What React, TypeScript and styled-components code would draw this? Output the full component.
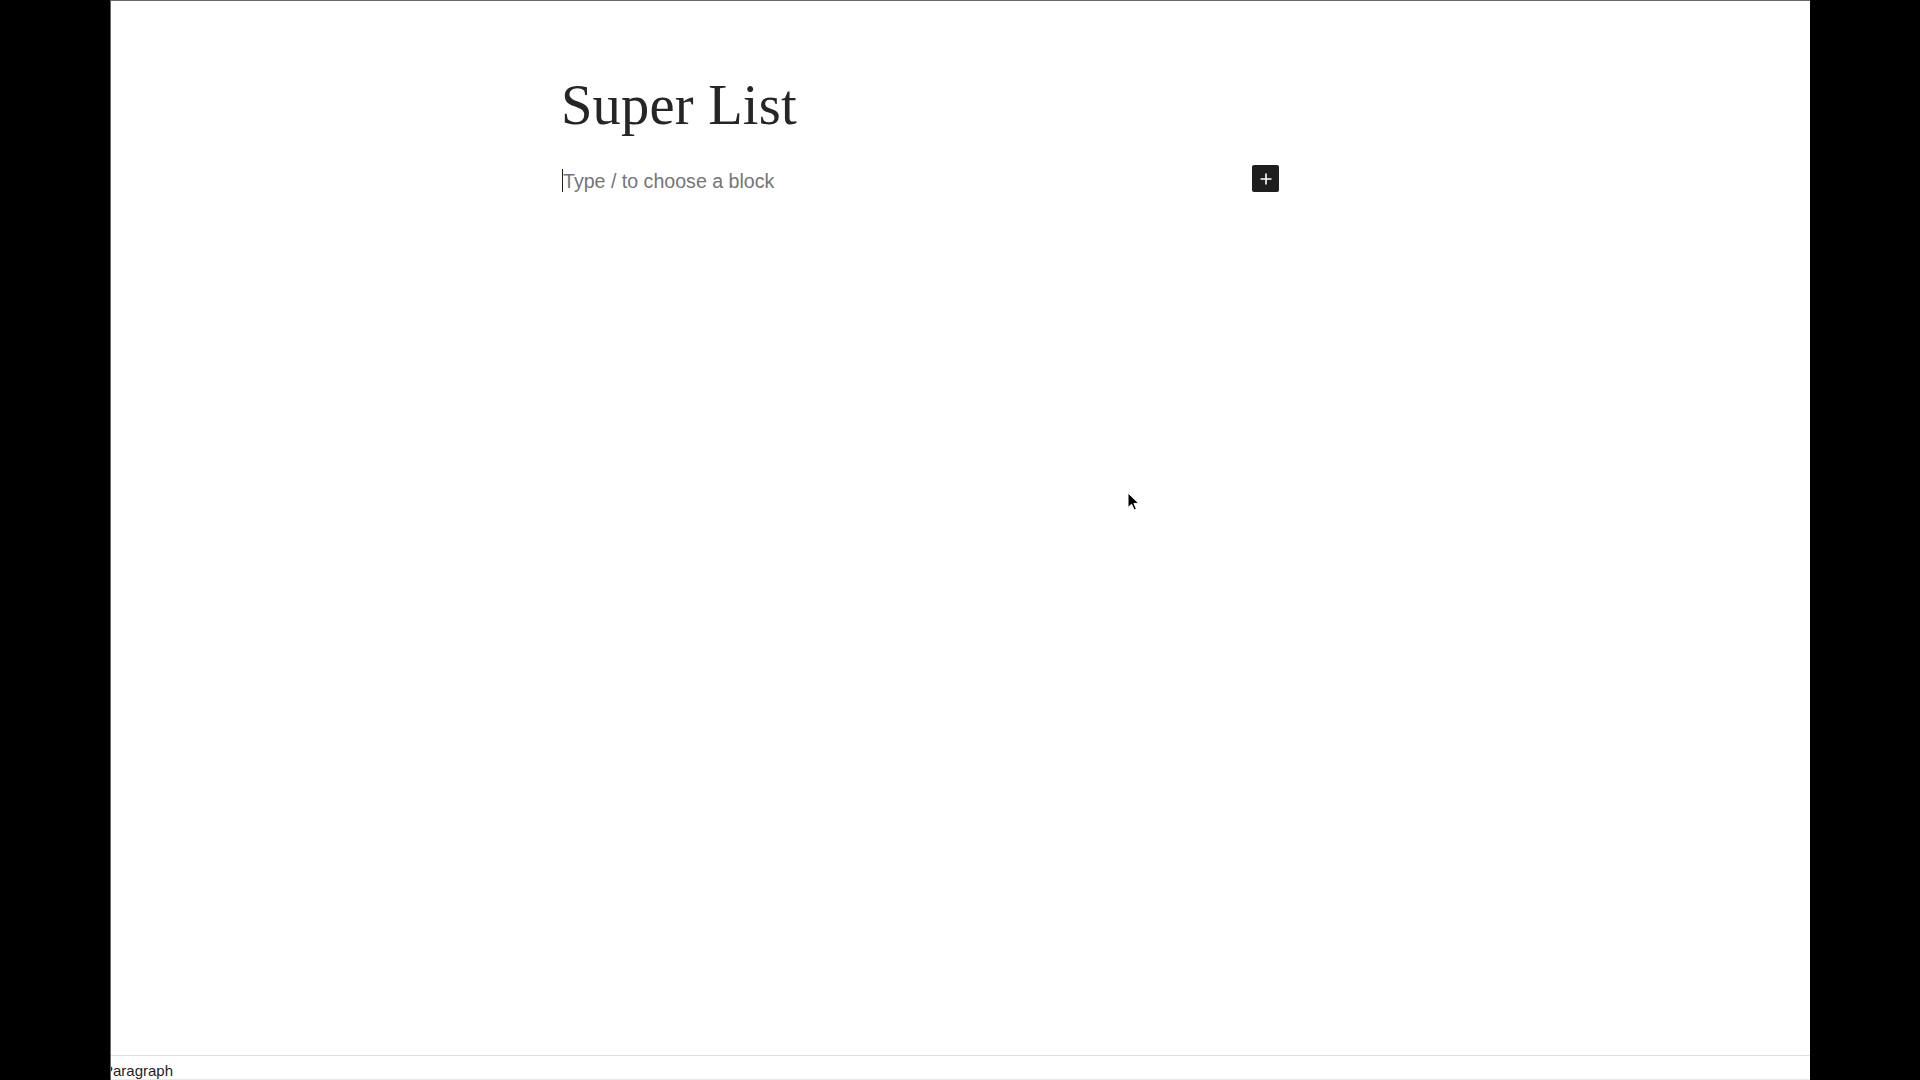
import React from "react";
import styled, { createGlobalStyle } from "styled-components";

const Global = createGlobalStyle`
  html, body { margin: 0; padding: 0; background: #000; }
  body { width: 1920px; height: 1080px; overflow: hidden; }
  #root { height: 1080px; }
`;

const Screen = styled.div`
  position: relative;
  display: flex;
  width: 1920px;
  height: 1080px;
  background: #000;
`;

const SideBar = styled.div<{ $w: number }>`
  width: ${(p) => p.$w}px;
  flex: none;
  background: #000;
`;

const Canvas = styled.main`
  flex: 1;
  display: flex;
  flex-direction: column;
  background: #fff;
  border-top: 1px solid #6a6a6a;
  border-left: 1px solid #6a6a6a;
  overflow: hidden;
  box-sizing: border-box;
`;

const Editor = styled.div`
  flex: 1;
  padding: 71px 0 0 452px;
  box-sizing: border-box;
`;

const Title = styled.h1`
  margin: 0 0 0 -2px;
  font-family: "Liberation Serif", "DejaVu Serif", serif;
  font-weight: 400;
  font-size: 56.5px;
  line-height: 67px;
  color: #262626;
  letter-spacing: 0.2px;
`;

const BlockRow = styled.div`
  display: flex;
  align-items: center;
  justify-content: space-between;
  width: 716px;
  height: 27px;
  margin-top: 26px;
`;

const Placeholder = styled.div`
  position: relative;
  margin-top: 5px;
  font-family: "Liberation Sans", Arial, sans-serif;
  font-size: 19.6px;
  line-height: 27px;
  color: #757575;
`;

const Caret = styled.span`
  position: absolute;
  left: -1px;
  top: 1px;
  width: 1px;
  height: 23px;
  background: #1e1e1e;
`;

const InserterButton = styled.button`
  width: 27px;
  height: 27px;
  padding: 0;
  border: none;
  border-radius: 2px;
  background: #1e1e1e;
  display: flex;
  align-items: center;
  justify-content: center;
  cursor: pointer;
`;

const Footer = styled.footer`
  height: 25px;
  border-top: 1px solid #e0e0e0;
  border-bottom: 1px solid #e8e8e8;
  box-sizing: border-box;
  display: flex;
  align-items: flex-start;
  overflow: hidden;
`;

const Crumb = styled.span`
  margin-left: -8px;
  padding-top: 6px;
  font-family: "Liberation Sans", Arial, sans-serif;
  font-size: 15px;
  line-height: 17px;
  color: #1e1e1e;
`;

const Pointer = styled.svg`
  position: absolute;
  left: 1127px;
  top: 492px;
`;

export default function App() {
  return (
    <>
      <Global />
      <Screen>
        <SideBar $w={110} />
        <Canvas>
          <Editor>
            <Title>Super List</Title>
            <BlockRow>
              <Placeholder>
                <Caret />
                Type / to choose a block
              </Placeholder>
              <InserterButton aria-label="Add block">
                <svg width="16" height="16" viewBox="0 0 16 16">
                  <path d="M8 2.5v11M2.5 8h11" stroke="#fff" strokeWidth="1.6" />
                </svg>
              </InserterButton>
            </BlockRow>
          </Editor>
          <Footer>
            <Crumb>Paragraph</Crumb>
          </Footer>
        </Canvas>
        <SideBar $w={110} />
        <Pointer width="14" height="20" viewBox="0 0 14 20">
          <path d="M1 1 L1 15.5 L4.6 12.2 L7.2 18 L9.4 17 L6.9 11.4 L11.8 11.4 Z" fill="#000" stroke="#fff" strokeWidth="1" strokeLinejoin="round" />
        </Pointer>
      </Screen>
    </>
  );
}
